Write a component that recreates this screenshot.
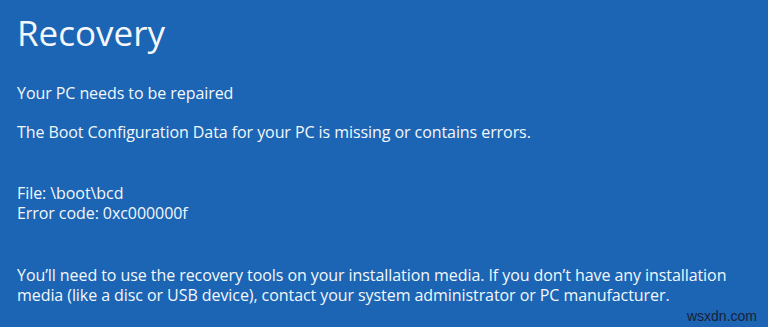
const App = () => {
  return (
    <div
      className="relative w-[768px] h-[327px] overflow-hidden bg-[#1b65b4] text-[#f4f7fb] pl-[17px] pt-[13px]"
      style={{ fontFamily: '"Open Sans", "Noto Sans", sans-serif' }}
    >
      <h1 className="text-[35px] leading-[40px] font-normal">Recovery</h1>
      <div className="mt-[30px] text-[16px] leading-[20px] tracking-[-0.07px]">
        <p>Your PC needs to be repaired</p>
        <p className="mt-[19px]">
          The Boot Configuration Data for your PC is missing or contains errors.
        </p>
        <div className="mt-[41px]">
          <p>File: \boot\bcd</p>
          <p>Error code: 0xc000000f</p>
        </div>
        <p className="mt-[42px] w-[730px]">
          You’ll need to use the recovery tools on your installation media. If you don’t have any installation
          media (like a disc or USB device), contact your system administrator or PC manufacturer.
        </p>
      </div>
      <span
        className="absolute right-[11px] bottom-[4px] text-[14px] leading-[14px] text-[#1a2238]"
        style={{ fontFamily: '"Liberation Sans", Arial, sans-serif' }}
      >
        wsxdn.com
      </span>
    </div>
  );
};

export default App;
